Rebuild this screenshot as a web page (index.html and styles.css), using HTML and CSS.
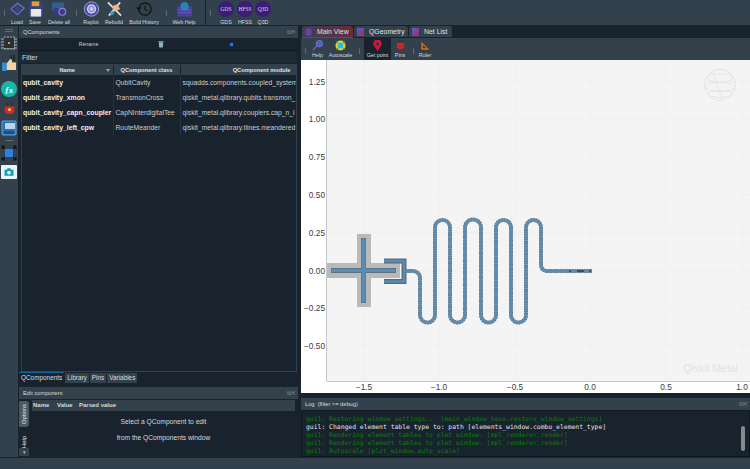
FILE: index.html
```html
<!DOCTYPE html>
<html lang="en">
<head>
<meta charset="utf-8">
<title>Qiskit Metal</title>
<link rel="stylesheet" href="styles.css">
</head>
<body>
<div class="app">
  <header class="topbar">
    <span class="grip g1"></span>
    <div class="tool w18"><svg viewBox="0 0 18 16" class="ti"><path d="M2 8 9 2l7 5-7 7z" fill="none" stroke="#6a5fd0" stroke-width="1.6"/><path d="M5 8 9 5l4 3-4 3z" fill="#2f4f6f"/></svg><span>Load</span></div>
    <div class="tool w18"><svg viewBox="0 0 18 16" class="ti"><path d="M2 0h13l2 2v14H2z" fill="#3a3f86"/><rect x="5" y="0" width="8" height="5" fill="#e0a030"/><rect x="4" y="8" width="11" height="8" fill="#e8e8e8"/></svg><span>Save</span></div>
    <div class="tool w30"><svg viewBox="0 0 18 16" class="ti"><rect x="1" y="1" width="13" height="9" rx="1" fill="#2f5f8f"/><rect x="3" y="7" width="13" height="8" rx="1" fill="#3f3a80"/><circle cx="12" cy="11" r="3.6" fill="none" stroke="#8a84d8" stroke-width="1.2"/></svg><span>Delete all</span></div>
    <span class="grip"></span>
    <div class="tool w26"><svg viewBox="0 0 18 16" class="ti"><circle cx="9" cy="8" r="7.6" fill="#4a4aa0" stroke="#b8b8e8" stroke-width=".8"/><circle cx="9" cy="8" r="5" fill="#c8c8f0"/><circle cx="9" cy="8" r="2.8" fill="none" stroke="#6a6ac0"/></svg><span>Replot</span></div>
    <div class="tool w20"><svg viewBox="0 0 18 16" class="ti"><path d="M2 1 16 15M15 1 3 15" stroke="#d8d8d8" stroke-width="2"/><path d="M6 5l6-2 3 5-6 3z" fill="#e8b48c"/><path d="M4 12l3-2 2 3-3 2z" fill="#2aa0c0"/></svg><span>Rebuild</span></div>
    <div class="tool w40"><svg viewBox="0 0 18 16" class="ti"><circle cx="9.500" cy="8" r="6.600" fill="none" stroke="#111" stroke-width="1.300"/><path d="M9.500 4v4.500l3 1.500M1 6l2 3 2-3" fill="none" stroke="#111" stroke-width="1.100"/></svg><span>Build History</span></div>
    <span class="grip"></span>
    <div class="tool w32"><svg viewBox="0 0 18 16" class="ti"><rect x="1" y="5" width="16" height="11" fill="#4a3fa0"/><circle cx="9" cy="5" r="4.500" fill="#2f7fb0"/><path d="M2 9h14M2 12h14" stroke="#7a70d0" stroke-width=".7"/></svg><span>Web Help</span></div>
    <span class="divider"></span>
    <span class="grip g2"></span>
    <div class="tool w20"><span class="disc">GDS</span><span>GDS</span></div>
    <div class="tool w18"><span class="disc">HFSS</span><span>HFSS</span></div>
    <div class="tool w18"><span class="disc">Q3D</span><span>Q3D</span></div>
  </header>

  <div class="main">
    <nav class="sidebar">
      <span class="sb-grip"></span>
      <svg class="si chip" viewBox="0 0 16 14"><path d="M4 0v14M7 0v14M10 0v14M13 0v14M0 3h16M0 6h16M0 9h16M0 12h16" stroke="#c9ccce" stroke-width=".8"/><rect x="3" y="2" width="10" height="10" fill="#2a2f33"/><rect x="7" y="6" width="2" height="2" fill="#c9a24a"/></svg>
      <svg class="si thumb" viewBox="0 0 16 18"><path d="M10 0v6M13 0v6" stroke="#222" stroke-width="1.500"/><rect x="0" y="8" width="5" height="9" fill="#2f8fdc"/><path d="M5 9l3-4 2-1 1 4h4v8H5z" fill="#f2d2a8"/></svg>
      <svg class="si big" viewBox="0 0 16 16"><circle cx="8" cy="8" r="8" fill="#14b8a8"/><text x="8" y="11.500" class="fx">ƒx</text></svg>
      <svg class="si plug" viewBox="0 0 16 16"><path d="M5 0v5M11 0v5" stroke="#333" stroke-width="1.600"/><path d="M2 5h12v6l-3 3H5l-3-3z" fill="#d42a2a"/><circle cx="8" cy="9" r="1.800" fill="#e8d040"/></svg>
      <svg class="si big doc" viewBox="0 0 16 16"><rect x="1" y="1" width="14" height="14" rx="1" fill="#2a6fb0" stroke="#5fa8e8"/><rect x="4" y="3" width="10" height="6" fill="#b8d4ee"/><rect x="3" y="11" width="10" height="3" fill="#1d4f80"/></svg>
      <span class="sb-line"></span>
      <svg class="si big sq" viewBox="0 0 16 16"><rect x="4" y="4" width="8" height="8" fill="#2a80e0"/><path d="M1 1l3 3M15 1l-3 3M1 15l3-3M15 15l-3-3M1 1h3M1 1v3M15 1h-3M15 1v3M1 15h3M1 15v-3M15 15h-3M15 15v-3" stroke="#111" stroke-width="1.100"/></svg>
      <div class="cam"><svg viewBox="0 0 16 12"><path d="M2 3h3l1-2h4l1 2h3v8H2z" fill="#12a0b8"/><circle cx="8" cy="7" r="2.400" fill="#fff"/></svg></div>
    </nav>

    <section class="left">
      <div class="dock top">
        <div class="title"><span>QComponents</span><span class="wbtns">⧉✕</span></div>
        <div class="rename">
          <span class="r1">Rename</span>
          <svg class="trash" viewBox="0 0 8 9"><path d="M1 2h6l-.6 7H1.600z" fill="#8fb0c0"/><rect x=".5" y=".6" width="7" height="1" fill="#8fb0c0"/></svg>
          <span class="dot"></span>
        </div>
        <div class="filter">Filter</div>
        <div class="tablewrap">
          <table class="comp">
            <thead><tr><th class="c1">Name<i class="sort"></i></th><th class="c2">QComponent class</th><th class="c3">QComponent module</th></tr></thead>
            <tbody>
              <tr><td class="nm">qubit_cavity</td><td>QubitCavity</td><td>squadds.components.coupled_system</td></tr>
              <tr><td class="nm">qubit_cavity_xmon</td><td>TransmonCross</td><td>qiskit_metal.qlibrary.qubits.transmon_</td></tr>
              <tr><td class="nm">qubit_cavity_capn_coupler</td><td>CapNInterdigitalTee</td><td>qiskit_metal.qlibrary.couplers.cap_n_i</td></tr>
              <tr><td class="nm">qubit_cavity_left_cpw</td><td>RouteMeander</td><td>qiskit_metal.qlibrary.tlines.meandered</td></tr>
            </tbody>
          </table>
        </div>
        <div class="tabs-b"><span class="tb on">QComponents</span><span class="tb">Library</span><span class="tb">Pins</span><span class="tb">Variables</span></div>
      </div>
      <div class="dock edit">
        <div class="title"><span>Edit component</span><span class="wbtns">⧉✕</span></div>
        <div class="edit-body">
          <div class="vtabs"><span class="vt on">Options</span><span class="vt off">Help</span><span class="vmore">▾</span></div>
          <div class="edit-tbl">
            <div class="ehead"><span class="e1">Name</span><span class="e2">Value</span><span>Parsed value</span></div>
            <p>Select a QComponent to edit</p>
            <p>from the QComponents window</p>
          </div>
        </div>
      </div>
    </section>

    <section class="right">
      <div class="vtabs-top">
        <div class="mt on"><i class="mi purple"></i>Main View</div>
        <div class="mt"><i class="mi"></i>QGeometry</div>
        <div class="mt"><i class="mi"></i>Net List</div>
      </div>
      <div class="plotbar">
        <span class="grip"></span>
        <div class="pt w21"><svg viewBox="0 0 12 12" class="pi"><circle cx="8" cy="4" r="3.500" fill="#3f6fa8" stroke="#7a70d0"/><path d="M5.500 6.500 1 11" stroke="#7a50b0" stroke-width="1.800"/></svg><span>Help</span></div>
        <div class="pt w25"><svg viewBox="0 0 12 12" class="pi"><circle cx="6" cy="6" r="5.500" fill="#e8d020"/><rect x="3" y="3" width="6" height="6" fill="#20c0e8"/><path d="M1 1l2 2M11 1 9 3M1 11l2-2M11 11 9 9" stroke="#d04020"/></svg><span>Autoscale</span></div>
        <span class="grip gs"></span>
        <div class="pt w27 sel"><svg viewBox="0 0 12 12" class="pi"><path d="M6 12 2 6a4.500 4.500 0 1 1 8 0z" fill="#e01030"/><circle cx="6" cy="4.300" r="1.800" fill="#2a3a46"/></svg><span>Get point</span></div>
        <div class="pt w18"><svg viewBox="0 0 12 12" class="pi"><path d="M4 0v3M8 0v3" stroke="#333" stroke-width="1.200"/><path d="M2 3h8v5l-2 2H4L2 8z" fill="#c82828"/></svg><span>Pins</span></div>
        <span class="grip gs2"></span>
        <div class="pt w18"><svg viewBox="0 0 12 12" class="pi"><path d="M1 1v10h10zM3.500 6v2.600h2.600z" fill="#c8701a" fill-rule="evenodd" stroke="#222" stroke-width=".4"/></svg><span>Ruler</span></div>
      </div>
      <div class="plot">
        <svg class="canvas" viewBox="301 60 449 333">
          <rect x="327" y="60" width="423" height="321" class="bg"/>
          <path class="grid" d="M364 60V381M439 60V381M515 60V381M590 60V381M666 60V381M742 60V381M327 82H750M327 119H750M327 157H750M327 195H750M327 233H750M327 271H750M327 308H750M327 346H750"/>
          <path class="axis" d="M326.500 60V381.500H750"/>
          <g class="wm">
            <circle cx="720" cy="85" r="15.500"/>
            <ellipse cx="720" cy="78" rx="13" ry="4"/><ellipse cx="720" cy="87" rx="15" ry="4.500"/><ellipse cx="720" cy="94" rx="12" ry="3.500"/>
            <path d="M713 72 722 100"/>
          </g>
          <text x="738" y="372" class="wmt">Qiskit Metal</text>

          <g class="gap">
            <rect x="327" y="263" width="73" height="15"/>
            <rect x="357" y="234" width="14" height="73"/>
          </g>
          <g class="edge">
            <path d="M331 270.500H396M363.500 238V303"/>
            <path d="M384 261H404V281.500H384"/>
          </g>
          <g class="metal">
            <path d="M331.500 270.500H395.500"/>
            <path class="mv" d="M363.500 238.500V302.500"/>
            <path class="claw" d="M384 261H404V281.500H384"/>
          </g>
          <g class="route">
            <path class="r1" d="M405 271H413A7 7 0 0 1 420 278V315A7.500 7.500 0 0 0 435 315V227.500A7.500 7.500 0 0 1 450 227.500V315A7.500 7.500 0 0 0 465 315V227.500A8 8 0 0 1 481 227.500V315A7.500 7.500 0 0 0 496 315V227.500A7.500 7.500 0 0 1 511 227.500V315A7.500 7.500 0 0 0 526 315V227.500A7.500 7.500 0 0 1 541 227.500V265A6 6 0 0 0 547 271H592"/>
            <path class="r2" d="M405 271H413A7 7 0 0 1 420 278V315A7.500 7.500 0 0 0 435 315V227.500A7.500 7.500 0 0 1 450 227.500V315A7.500 7.500 0 0 0 465 315V227.500A8 8 0 0 1 481 227.500V315A7.500 7.500 0 0 0 496 315V227.500A7.500 7.500 0 0 1 511 227.500V315A7.500 7.500 0 0 0 526 315V227.500A7.500 7.500 0 0 1 541 227.500V265A6 6 0 0 0 547 271H592"/>
            <path class="r3" d="M569 271H571M577 271H584M589 271H591"/>
          </g>

          <g class="yl">
            <text x="325" y="85">1.25</text><text x="325" y="122">1.00</text><text x="325" y="160">0.75</text><text x="325" y="198">0.50</text><text x="325" y="236">0.25</text><text x="325" y="274">0.00</text><text x="325" y="311">−0.25</text><text x="325" y="349">−0.50</text>
          </g>
          <g class="xl">
            <text x="364" y="390">−1.5</text><text x="439" y="390">−1.0</text><text x="515" y="390">−0.5</text><text x="590" y="390">0.0</text><text x="666" y="390">0.5</text><text x="742" y="390">1.0</text>
          </g>
        </svg>
      </div>
      <div class="logdock">
        <div class="title"><span>Log &nbsp;(filter &gt;= debug)</span><span class="wbtns">⧉✕</span></div>
        <div class="logbody">
          <div class="lines">
            <div class="g">guil: Restoring window settings... [main_window_base.restore_window_settings]</div>
            <div class="w">guil: Changed element table type to: path [elements_window.combo_element_type]</div>
            <div class="g">guil: Rendering element tables to plot window. [mpl_renderer.render]</div>
            <div class="g">guil: Rendering element tables to plot window. [mpl_renderer.render]</div>
            <div class="g">guil: Autoscale [plot_window.auto_scale]</div>
          </div>
          <div class="scroll"><i></i></div>
        </div>
      </div>
    </section>
  </div>
  <footer class="status"></footer>
</div>
</body>
</html>
```
FILE: styles.css
```css
* { box-sizing: border-box; }
html, body { margin: 0; padding: 0; }
body {
  width: 750px; height: 469px; overflow: hidden;
  background: #19232d; color: #e6e9ea;
  font-family: "Liberation Sans", Arial, sans-serif;
}
.app { display: grid; grid-template-rows: 26px 431px 12px; width: 750px; height: 469px; }

/* top toolbar */
.topbar { display: flex; align-items: stretch; background: #32414b; padding-left: 2px; border-bottom: 1px solid #19232d; }
.tool { display: flex; flex-direction: column; align-items: center; justify-content: flex-start; gap: 2px; font-size: 5.300px; line-height: 6px; color: #d5dade; white-space: nowrap; padding-top: 1px; }
.ti { width: 17px; height: 16px; display: block; }
.w18 { width: 18px; } .w20 { width: 20px; } .w26 { width: 26px; } .w30 { width: 30px; } .w32 { width: 32px; } .w40 { width: 40px; }
.grip { width: 4px; margin: 0; position: relative; flex: none; }
.grip::before { content: ""; display: block; width: 1px; height: 6px; margin: 10px 0 0 2px; background: #5a6a74; }
.g1 { width: 6px; }
.g2 { width: 6px; margin-right: 2px; }
.divider { width: 1px; margin-left: 5px; background: #19232d; margin-right: 2px; }
.disc { width: 16px; height: 16px; border-radius: 50%; background: #3b1d78; color: #d9d4ee; font: 5.500px/16px "Liberation Serif", serif; text-align: center; }

/* main */
.main { display: flex; min-height: 0; }
.sidebar { width: 19px; flex: none; background: #32414b; border-right: 1px solid #19232d; display: flex; flex-direction: column; align-items: center; padding-top: 3px; }
.sb-grip { width: 8px; height: 3px; border-top: 1px solid #5a6a74; border-bottom: 1px solid #5a6a74; margin-bottom: 4px; }
.si { width: 13px; height: 14px; display: block; flex: none; }
.si.big { width: 16px; height: 16px; }
.chip { width: 16px; margin-bottom: 5px; }
.thumb { width: 15px; height: 17px; margin-bottom: 9px; }
.si.big + .plug { margin-top: 5px; }
.plug { margin-bottom: 4px; }
.doc { margin-bottom: 4px; }
.fx { font: italic 700 8px "Liberation Serif", serif; fill: #fff; text-anchor: middle; }
.sb-line { width: 7px; height: 1px; background: #5f6e78; margin: 0 0 4px; }
.sq { margin-bottom: 4px; }
.cam { width: 16px; height: 14px; background: #e8f4f6; border-radius: 1px; padding: 2px; }
.cam svg { display: block; width: 12px; height: 10px; }

.left { width: 279px; flex: none; display: flex; flex-direction: column; gap: 3px; }
.dock { display: flex; flex-direction: column; min-height: 0; }
.top { height: 358px; }
.edit { height: 70px; }
.title { height: 12px; flex: none; background: #32414b; display: flex; justify-content: space-between; align-items: center; padding: 0 3px 0 4px; font-size: 5.700px; color: #d8dcdf; }
.wbtns { font-size: 6px; color: #7a8a94; letter-spacing: -.5px; }

.rename { height: 13px; flex: none; display: flex; align-items: center; font-size: 5.200px; color: #c9ced2; border-bottom: 1px solid #101820; }
.r1 { width: 139px; text-align: center; }
.trash { width: 6px; height: 8px; margin-right: 66px; }
.dot { width: 3px; height: 3px; background: #1a7ae8; box-shadow: 0 0 0 1px #0d2a50; }

.filter { height: 11px; flex: none; margin: 1px 1px 1px 0; padding-left: 3px; background: #1c2a36; font-size: 7px; line-height: 11px; color: #d8dcdf; }
.tablewrap { flex: 1; min-height: 0; margin: 0 1px 0 2px; border: 1px solid #32414b; overflow: hidden; }
.comp { width: 275px; table-layout: fixed; border-collapse: collapse; font-size: 6.750px; }
.comp th { height: 10px; background: #32414b; font-weight: 700; font-size: 5.700px; color: #dfe3e6; padding: 0; position: relative; border-right: 1px solid #19232d; white-space: nowrap; }
.c1 { width: 91px; }
.c2 { width: 67px; }
.c3 { width: 117px; text-align: right; padding-right: 6px !important; }
.sort { position: absolute; right: 3px; top: 4px; border: 2px solid transparent; border-top: 3px solid #9aa4aa; border-bottom: 0; }
.comp td { height: 15px; padding: 0 0 0 2px; white-space: nowrap; overflow: hidden; color: #c6ccd0; border-right: 1px solid #26323c; }
.comp td.nm { font-weight: 700; color: #eef0f1; font-size: 6.850px; padding-left: 1px; }

.tabs-b { height: 12px; flex: none; display: flex; font-size: 6.400px; line-height: 11px; }
.tb { background: #32414b; padding: 0 2px; margin-right: 1px; color: #d8dcdf; height: 10px; margin-top: 1px; line-height: 10px; }
.tb.on { background: #19232d; border-top: 1px solid #1464a0; height: 12px; margin-top: 0; padding-left: 2px; }

.edit-body { flex: 1; display: flex; min-height: 0; }
.vtabs { width: 12px; flex: none; display: flex; flex-direction: column; align-items: flex-start; overflow: hidden; padding-top: 2px; }
.vt { writing-mode: vertical-rl; transform: rotate(180deg); font-size: 5.800px; width: 10px; text-align: center; line-height: 10px; }
.vt.on { background: #4a5a64; height: 26px; border-radius: 3px 0 0 3px; }
.vt.off { height: 19px; text-align: left; margin-top: 2px; overflow: hidden; }
.vmore { font-size: 5px; color: #c0c6ca; background: #32414b; width: 10px; text-align: center; line-height: 8px; }
.edit-tbl { flex: 1; margin: 1px 3px 0 1px; text-align: center; font-size: 6.700px; color: #d5d9dc; }
.ehead { display: flex; height: 11px; background: #32414b; font-size: 6px; font-weight: 700; line-height: 11px; text-align: left; padding-left: 1px; margin-bottom: 3px; }
.e1 { width: 24px; } .e2 { width: 22px; }
.edit-tbl p { margin: 0; height: 15.500px; line-height: 15px; }

/* right */
.right { flex: 1; min-width: 0; margin-left: 3px; display: flex; flex-direction: column; }
.vtabs-top { height: 12px; flex: none; display: flex; gap: 1px; padding-left: 1px; font-size: 6.900px; line-height: 10px; }
.mt { background: #32414b; padding: 0 0 0 3px; border-radius: 3px 3px 0 0; height: 11px; display: flex; align-items: center; gap: 5px; color: #dfe3e6; }
.mt:nth-child(2) { width: 54px; }
.mt:nth-child(3) { width: 43px; }
.mt.on { width: 51px; background: linear-gradient(90deg, #3a3f55, #6a2a3e); border-bottom: 1px solid #1464a0; height: 12px; }
.mi { width: 7px; height: 8px; flex: none; background: linear-gradient(135deg, #5a5ad0, #a03060); }
.mi.purple { background: #6a3fa0; border-radius: 50%; }
.plotbar { height: 22px; flex: none; display: flex; background: #32414b; font-size: 5.300px; color: #d8dcdf; padding-left: 2px; }
.pt { display: flex; flex-direction: column; align-items: center; justify-content: center; white-space: nowrap; gap: 1px; }
.pi { width: 11px; height: 11px; display: block; }
.w21 { width: 21px; } .w25 { width: 25px; } .w27 { width: 27px; }
.sel { background: #19232d; }
.gs { margin-left: 4px; margin-right: 3px; }
.gs2 { margin-left: 2px; margin-right: 1px; }
.plot { height: 333px; flex: none; background: #fff; }
.canvas { display: block; width: 449px; height: 333px; }
.bg { fill: #f4f4f4; }
.grid { fill: none; stroke: #e6e6e6; stroke-width: .7; stroke-dasharray: 1 1; }
.axis { fill: none; stroke: #c8c8c8; stroke-width: 1; }
.wm { fill: none; stroke: #e6e6e6; stroke-width: 1; }
.wmt { font: 400 10.500px "Liberation Sans", sans-serif; fill: #e2e2e2; text-anchor: end; }
.gap { fill: #b9b9b9; }
.edge { fill: none; stroke: #5b6a76; stroke-width: 5; }
.metal { fill: none; stroke: #5a8cb4; stroke-width: 3.400; }
.metal .mv { stroke-width: 4; }
.metal .claw { stroke-width: 2.600; }
.route { fill: none; }
.r1 { stroke: #66747f; stroke-width: 4; stroke-dasharray: 2 .4; }
.r2 { stroke: #5a8cb4; stroke-width: 2.600; }
.r3 { stroke: #444f58; stroke-width: 2.200; }
.yl text { font-size: 8.300px; fill: #3c3c3c; text-anchor: end; }
.xl text { font-size: 8.300px; fill: #3c3c3c; text-anchor: middle; }

.logdock { flex: 1; min-height: 0; margin-top: 5px; display: flex; flex-direction: column; }
.logbody { flex: 1; display: flex; min-height: 0; background: #19232d; border: 1px solid #101820; padding: 4px 0 0 4px; }
.lines { flex: 1; font: 6.400px/8px "DejaVu Sans Mono", "Liberation Mono", monospace; white-space: nowrap; }
.g { color: #0c7d0c; }
.w { color: #e2e5e7; }
.scroll { width: 5px; margin: 6px 3px 4px 0; }
.scroll i { display: block; width: 4px; height: 25px; margin-top: 5px; background: #828b90; border-radius: 2px; }

.status { background: #32414b; border-top: 1px solid #19232d; }
```
